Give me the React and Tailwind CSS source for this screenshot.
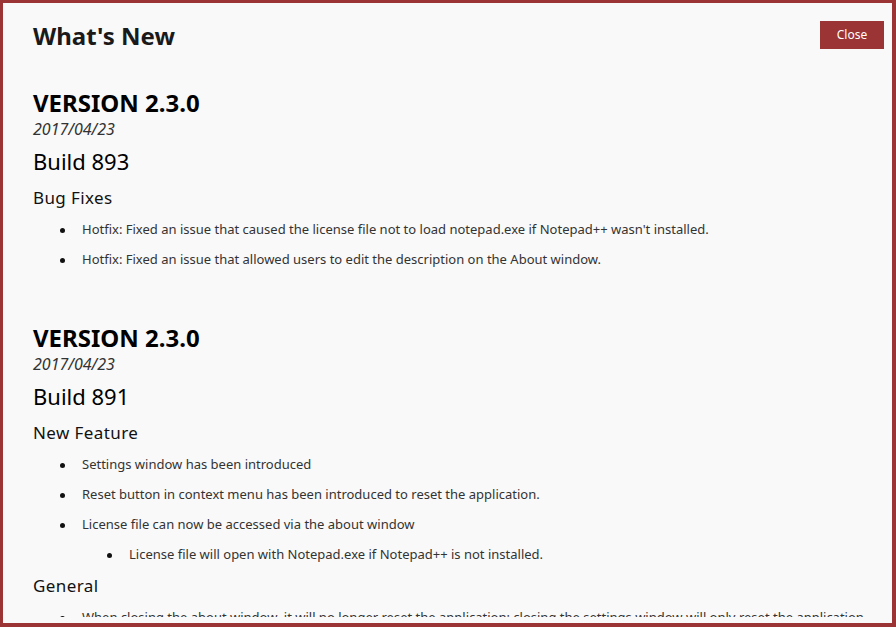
const releases = [
  {
    version: '2.3.0',
    date: '2017/04/23',
    build: 893,
    sections: [
      {
        title: 'Bug Fixes',
        items: [
          { text: "Hotfix: Fixed an issue that caused the license file not to load notepad.exe if Notepad++ wasn't installed." },
          { text: 'Hotfix: Fixed an issue that allowed users to edit the description on the About window.' },
        ],
      },
    ],
  },
  {
    version: '2.3.0',
    date: '2017/04/23',
    build: 891,
    sections: [
      {
        title: 'New Feature',
        items: [
          { text: 'Settings window has been introduced' },
          { text: 'Reset button in context menu has been introduced to reset the application.' },
          {
            text: 'License file can now be accessed via the about window',
            children: ['License file will open with Notepad.exe if Notepad++ is not installed.'],
          },
        ],
      },
      {
        title: 'General',
        items: [
          { text: 'When closing the about window, it will no longer reset the application; closing the settings window will only reset the application' },
        ],
      },
    ],
  },
];

function Bullet({ children, nested }) {
  return (
    <li className={`flex items-start ${nested ? 'pl-[74px]' : 'pl-[27px]'}`}>
      <span className="w-[22px] shrink-0 h-[18px] flex items-center">
        <span className="w-[5px] h-[5px] rounded-full bg-[#111] mt-[2px]" />
      </span>
      <span>{children}</span>
    </li>
  );
}

export default function App() {
  return (
    <div className="h-[627px] flex flex-col bg-[#f9f9f9] border-l-[3px] border-t-[3px] border-r-4 border-b-4 border-[#9b3435] font-['Noto_Sans',sans-serif]">
      <div className="flex-1 overflow-hidden mb-[6px] pl-[30px] pr-[8px]">
        <div className="flex items-start justify-between pt-[17px]">
          <h1 className="text-[24px] leading-[32px] font-bold text-[#1a1a1a]">What's New</h1>
          <button className="mt-[1px] w-[64px] h-[28px] bg-[#9b3435] text-white text-[12px]">Close</button>
        </div>

        {releases.map((r, i) => (
          <div key={i} className={i === 0 ? 'mt-[37px]' : 'mt-[56px]'}>
            <h2 className="text-[24px] leading-[28px] font-bold text-black">VERSION {r.version}</h2>
            <p className="mt-[2px] text-[16px] leading-[20px] italic text-[#333]">{r.date}</p>
            <h3 className="mt-[8px] text-[22px] leading-[28px] text-black">Build {r.build}</h3>
            {r.sections.map((s, j) => (
              <div key={j} className="mt-[12px]">
                <h4 className="text-[17px] leading-[22px] tracking-[0.4px] text-[#111]">{s.title}</h4>
                <ul className="mt-[11px] text-[13px] leading-[18px] text-[#333]">
                  {s.items.map((it, k) => (
                    <div key={k} className={k === 0 ? '' : 'mt-[12px]'}>
                      <Bullet>{it.text}</Bullet>
                      {it.children && (
                        <ul className="mt-[12px]">
                          {it.children.map((c, m) => (
                            <Bullet key={m} nested>{c}</Bullet>
                          ))}
                        </ul>
                      )}
                    </div>
                  ))}
                </ul>
              </div>
            ))}
          </div>
        ))}
      </div>
    </div>
  );
}
